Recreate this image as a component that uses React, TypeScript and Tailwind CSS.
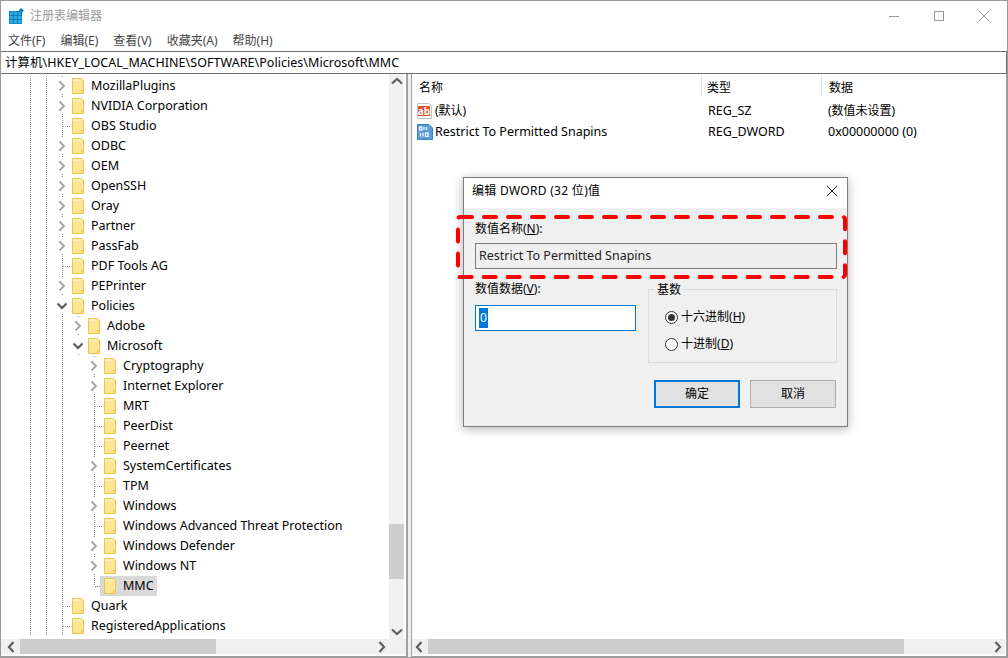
const font = { fontFamily: '"Noto Sans", "Noto Sans CJK SC", sans-serif' };

type Kind = "closed" | "open" | "leaf" | "last";

type Node = {
	label: string;
	level: number;
	kind: Kind;
	selected?: boolean;
};

const nodes: Node[] = [
	{ label: "MozillaPlugins", level: 0, kind: "closed" },
	{ label: "NVIDIA Corporation", level: 0, kind: "closed" },
	{ label: "OBS Studio", level: 0, kind: "leaf" },
	{ label: "ODBC", level: 0, kind: "closed" },
	{ label: "OEM", level: 0, kind: "closed" },
	{ label: "OpenSSH", level: 0, kind: "closed" },
	{ label: "Oray", level: 0, kind: "closed" },
	{ label: "Partner", level: 0, kind: "closed" },
	{ label: "PassFab", level: 0, kind: "closed" },
	{ label: "PDF Tools AG", level: 0, kind: "leaf" },
	{ label: "PEPrinter", level: 0, kind: "closed" },
	{ label: "Policies", level: 0, kind: "open" },
	{ label: "Adobe", level: 1, kind: "closed" },
	{ label: "Microsoft", level: 1, kind: "open" },
	{ label: "Cryptography", level: 2, kind: "closed" },
	{ label: "Internet Explorer", level: 2, kind: "closed" },
	{ label: "MRT", level: 2, kind: "leaf" },
	{ label: "PeerDist", level: 2, kind: "leaf" },
	{ label: "Peernet", level: 2, kind: "leaf" },
	{ label: "SystemCertificates", level: 2, kind: "closed" },
	{ label: "TPM", level: 2, kind: "leaf" },
	{ label: "Windows", level: 2, kind: "closed" },
	{ label: "Windows Advanced Threat Protection", level: 2, kind: "leaf" },
	{ label: "Windows Defender", level: 2, kind: "closed" },
	{ label: "Windows NT", level: 2, kind: "closed" },
	{ label: "MMC", level: 2, kind: "last", selected: true },
	{ label: "Quark", level: 0, kind: "leaf" },
	{ label: "RegisteredApplications", level: 0, kind: "leaf" },
];

function Dots({ d }: { d: string }) {
	return <path d={d} stroke="#8f8f8f" strokeWidth="1" strokeDasharray="1 1" fill="none" />;
}

// one 16x20 cell of the tree gutter
function Cell({ type }: { type: Kind | "guide" | "empty" }) {
	return (
		<svg width="16" height="20" className="shrink-0">
			{type === "guide" && <Dots d="M8.5 0V20" />}
			{type === "leaf" && <Dots d="M8.5 0V20M9 10.5H16" />}
			{type === "last" && <Dots d="M8.5 0V10M9 10.5H16" />}
			{type === "closed" && (
				<>
					<Dots d="M8.5 0V2M8.5 18V20" />
					<path d="M5.5 5.5L10 10L5.5 14.5" stroke="#a6a6a6" strokeWidth="2" fill="none" />
				</>
			)}
			{type === "open" && (
				<>
					<Dots d="M8.5 18V20" />
					<path d="M3.5 7.5L8 12L12.5 7.5" stroke="#595959" strokeWidth="2" fill="none" />
				</>
			)}
		</svg>
	);
}

function Folder() {
	return (
		<svg width="12" height="16" viewBox="0 0 12 16" className="shrink-0">
			<path d="M.5 .5H9.5L11.5 2.5V15.5H.5Z" fill="#ffe696" stroke="#edc448" />
			<rect x="1" y="1" width="8" height="2" fill="#fff0bd" />
			<path d="M9.5 15.5V12.5H11.5" fill="none" stroke="#edc448" />
		</svg>
	);
}

function TreeRow({ node }: { node: Node }) {
	// Microsoft has no next sibling, so its children get an empty cell in that column
	const gutter: ("guide" | "empty")[] = ["guide", "guide"];
	if (node.level >= 1) gutter.push("guide");
	if (node.level >= 2) gutter.push("empty");
	return (
		<div className="flex h-5 items-center pl-[21px]">
			{gutter.map((g, i) => (
				<Cell key={i} type={g} />
			))}
			<Cell type={node.kind} />
			<div className={`flex h-5 items-center ${node.selected ? "-ml-[2px] bg-[#d9d9d9] pl-1 pr-[3px]" : "ml-0.5"}`}>
				<Folder />
				<span className="whitespace-nowrap pl-[7px] text-black">{node.label}</span>
			</div>
		</div>
	);
}

function Arrow({ dir }: { dir: "up" | "down" | "left" | "right" }) {
	const d = {
		up: "M3 9.5L8 5L13 9.5",
		down: "M3 6.5L8 11L13 6.5",
		left: "M9.5 3L5 8L9.5 13",
		right: "M6.5 3L11 8L6.5 13",
	}[dir];
	return (
		<svg width="16" height="16" className="shrink-0">
			<path d={d} stroke="#5f5f5f" strokeWidth="2.2" fill="none" />
		</svg>
	);
}

function RegIcon() {
	return (
		<svg width="15" height="16" viewBox="0 0 15 16" className="shrink-0">
			<rect x="0" y="3" width="13" height="13" fill="#0f6fa8" />
			{[0.5, 4.75, 9].map((x) =>
				[3.5, 7.75, 12].map((y) => <rect key={`${x}-${y}`} x={x} y={y} width="3.5" height="3.5" fill="#27aae6" />)
			)}
			<path d="M9.5 2.5L12 0L15 2.5L12 5.5Z" fill="#1583bd" />
		</svg>
	);
}

function AbIcon() {
	return (
		<div className="h-4 w-[15px] shrink-0 rounded-tr-[4px] border border-[#c4c4c4] bg-white">
			<div className="mt-[2px] flex h-[10px] w-[12px] items-center justify-center bg-[#d9542b] text-[10px] font-bold leading-none text-white">
				ab
			</div>
		</div>
	);
}

function BinIcon() {
	return (
		<svg width="16" height="16" viewBox="0 0 16 16" className="shrink-0">
			<path d="M.5 .5H12L15.5 4V15.5H.5Z" fill="#5b9bd9" stroke="#3f7fc0" />
			<g fill="none" stroke="#fff" strokeWidth="1.2">
				<rect x="2.5" y="3" width="2.4" height="3" />
				<path d="M7 3V6M9.6 3V6" />
				<path d="M3.5 9V12.5M6 9V12.5" />
				<rect x="8.5" y="9" width="2.6" height="3.4" />
			</g>
		</svg>
	);
}

function Radio({ checked, label, mnemonic }: { checked?: boolean; label: string; mnemonic: string }) {
	return (
		<div className="flex h-[14px] items-center">
			<div className="mr-[3px] flex h-[13px] w-[13px] items-center justify-center rounded-full border border-[#333] bg-white">
				{checked && <div className="h-[7px] w-[7px] rounded-full bg-[#333]" />}
			</div>
			<span className="text-[12px]">
				{label}(<span className="underline">{mnemonic}</span>)
			</span>
		</div>
	);
}

function EditDialog() {
	return (
		<div className="absolute left-[462px] top-[176px] flex h-[250px] w-[385px] flex-col border border-[#7d7d7d] bg-[#f0f0f0] text-[12px] text-black shadow-[0_2px_10px_rgba(0,0,0,0.3)]">
			<div className="flex h-[30px] shrink-0 items-center justify-between bg-white pb-[4px] pl-[8px] pr-[9px]">
				<span className="tracking-[0.3px]">编辑 DWORD (32 位)值</span>
				<svg width="12" height="12" viewBox="0 0 12 12">
					<path d="M1 1L11 11M11 1L1 11" stroke="#222" strokeWidth="1" fill="none" />
				</svg>
			</div>
			<div className="flex flex-col pl-[11px] pr-[10px] pt-[13px]">
				<div className="h-[15px] leading-[15px]">
					数值名称(<span className="underline">N</span>):
				</div>
				<div className="mt-[7px] flex h-[26px] w-[362px] items-center border border-[#7a7a7a] bg-[#efefef] pl-[3px] text-[12.5px] text-[#222]">
					Restrict To Permitted Snapins
				</div>
				<div className="mt-[20px] flex">
					<div className="-mt-[8px] w-[173px] shrink-0">
						<div className="h-[16px] leading-[16px]">
							数值数据(<span className="underline">V</span>):
						</div>
						<div className="mt-[8px] flex h-[26px] w-[161px] items-center border border-[#0078d7] bg-white pl-[3px]">
							<span className="bg-[#0078d7] px-[1px] text-white">0</span>
						</div>
					</div>
					<div className="relative h-[74px] w-[189px] shrink-0 border border-[#dcdcdc]">
						<span className="absolute -top-[8px] left-[6px] bg-[#f0f0f0] px-[2px] leading-[16px]">基数</span>
						<div className="flex flex-col gap-[13px] pl-[16px] pt-[20px]">
							<Radio checked label="十六进制" mnemonic="H" />
							<Radio label="十进制" mnemonic="D" />
						</div>
					</div>
				</div>
				<div className="mt-[17px] flex justify-end gap-[10px] pr-[1px]">
					<button className="h-[28px] w-[86px] border-2 border-[#0078d7] bg-[#e1e1e1]">确定</button>
					<button className="h-[28px] w-[86px] border border-[#adadad] bg-[#e1e1e1]">取消</button>
				</div>
			</div>
		</div>
	);
}

export default function App() {
	return (
		<div style={font} className="relative flex h-[658px] w-[1008px] flex-col overflow-hidden border border-[#9a9a9a] bg-white text-[12.5px] leading-5 text-black">
			{/* title bar */}
			<div className="flex h-[29px] shrink-0 items-center justify-between pl-[8px] pr-[18px]">
				<div className="flex items-center gap-[6px]">
					<RegIcon />
					<span className="text-[12px] text-[#999]">注册表编辑器</span>
				</div>
				<div className="flex items-center gap-[35px]">
					<svg width="10" height="10">
						<path d="M0 5.5H10" stroke="#999" fill="none" />
					</svg>
					<svg width="10" height="10">
						<rect x=".5" y=".5" width="9" height="9" stroke="#999" fill="none" />
					</svg>
					<svg width="10" height="10">
						<path d="M0 0L10 10M10 0L0 10" stroke="#999" fill="none" />
					</svg>
				</div>
			</div>

			{/* menu */}
			<div className="flex h-[21px] shrink-0 items-center gap-[15px] pl-[7px] text-[12px] text-[#444]">
				<span>文件(F)</span>
				<span>编辑(E)</span>
				<span>查看(V)</span>
				<span>收藏夹(A)</span>
				<span>帮助(H)</span>
			</div>

			{/* address */}
			<div className="flex h-[23px] shrink-0 items-center border-y border-r border-[#6f6f6f] pl-[4px] tracking-[0.04px]">
				计算机\HKEY_LOCAL_MACHINE\SOFTWARE\Policies\Microsoft\MMC
			</div>

			<div className="flex min-h-0 flex-1 bg-[#f0f0f0]">
				{/* tree pane */}
				<div className="flex w-[407px] shrink-0 flex-col border-r-2 border-b border-[#a0a0a0] bg-white pb-[2px]">
					<div className="flex min-h-0 flex-1">
						<div className="min-w-0 flex-1 overflow-hidden pt-[2px]">
							{nodes.map((n) => (
								<TreeRow key={n.label} node={n} />
							))}
						</div>
						<div className="flex w-[15px] shrink-0 flex-col bg-[#f0f0f0]">
							<Arrow dir="up" />
							<div className="flex-1 pt-[434px]">
								<div className="h-[55px] bg-[#cdcdcd]" />
							</div>
							<Arrow dir="down" />
						</div>
						<div className="w-[2px] shrink-0" />
					</div>
					<div className="flex h-[15px] shrink-0 items-center bg-[#f0f0f0] pl-[3px]">
						<Arrow dir="left" />
						<div className="h-full w-[196px] bg-[#cdcdcd]" />
						<div className="flex-1" />
						<div className="pr-[17px]">
							<Arrow dir="right" />
						</div>
					</div>
				</div>

				<div className="w-[3px] shrink-0 bg-[#f0f0f0]" />

				{/* values pane */}
				<div className="flex min-w-0 flex-1 flex-col border-x border-b border-[#a0a0a0] bg-white pb-[2px] pr-[1px]">
					<div className="flex h-[26px] shrink-0 pl-[7px] text-[12px]">
						<div className="w-[282px] pt-[4px]">名称</div>
						<div className="h-[23px] w-[120px] border-l border-[#e5e5e5] pl-[5px] pt-[4px]">类型</div>
						<div className="h-[23px] border-l border-[#e5e5e5] pl-[7px] pt-[4px]">数据</div>
					</div>
					<div className="flex-1 pl-[5px]">
						<div className="flex h-[21px] items-center">
							<div className="flex w-[284px] items-center gap-[3px]">
								<AbIcon />
								<span className="text-[12px]">(默认)</span>
							</div>
							<div className="w-[127px] pl-[7px]">REG_SZ</div>
							<div className="text-[12px]">(数值未设置)</div>
						</div>
						<div className="flex h-[21px] items-center">
							<div className="flex w-[284px] items-center gap-[2px]">
								<BinIcon />
								<span>Restrict To Permitted Snapins</span>
							</div>
							<div className="w-[127px] pl-[7px]">REG_DWORD</div>
							<div>0x00000000 (0)</div>
						</div>
					</div>
					<div className="flex h-[15px] shrink-0 items-center bg-[#f0f0f0]">
						<Arrow dir="left" />
						<div className="h-full w-[476px] bg-[#cdcdcd]" />
						<div className="flex-1" />
						<Arrow dir="right" />
					</div>
				</div>
			</div>

			<EditDialog />

			{/* red annotation drawn over the dialog */}
			<svg className="pointer-events-none absolute left-[453px] top-[212px]" width="396" height="68">
				<rect x="4" y="4" width="387" height="60" rx="2" fill="none" stroke="#ff0000" strokeWidth="4" strokeLinecap="round" strokeDasharray="12 12" />
			</svg>
		</div>
	);
}
